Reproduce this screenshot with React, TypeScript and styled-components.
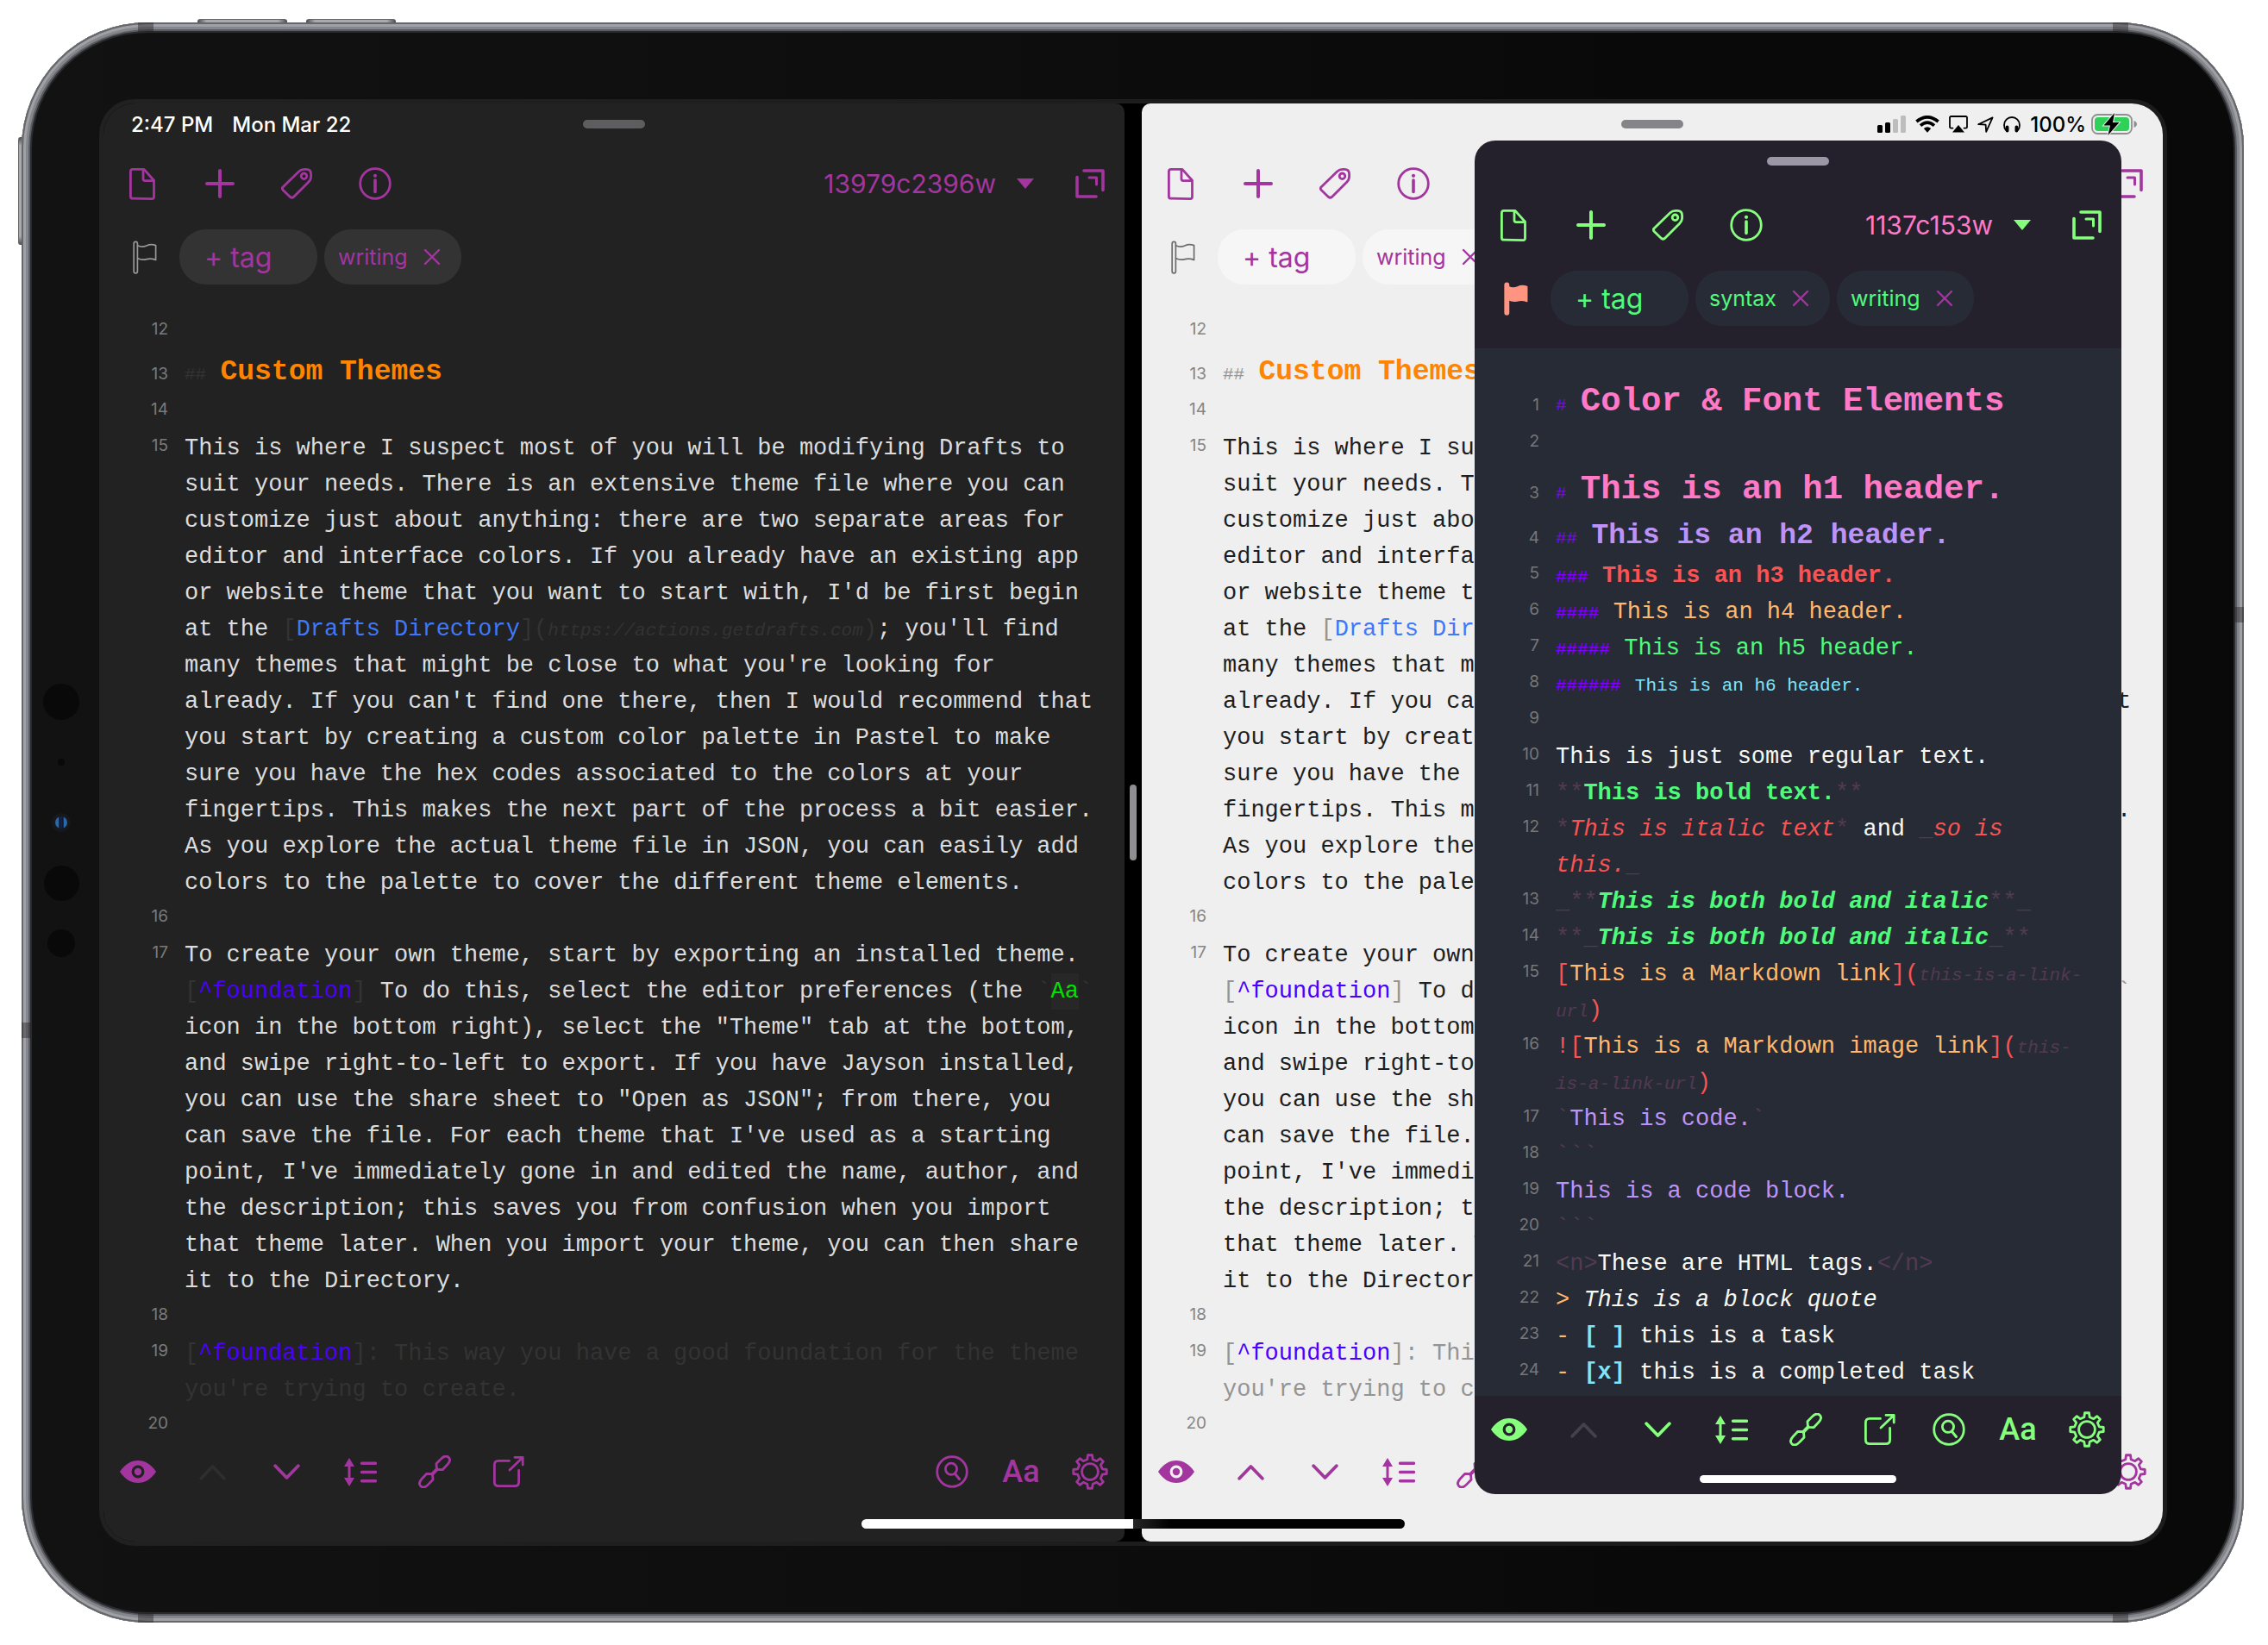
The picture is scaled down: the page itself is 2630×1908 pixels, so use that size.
import React from "react";
import styled, { createGlobalStyle, ThemeProvider } from "styled-components";

const mono = `"Liberation Mono", "DejaVu Sans Mono", monospace`;
const sans = `Inter, Roboto, "Liberation Sans", sans-serif`;

interface PaneTheme {
  chrome: string;
  editor: string;
  accent: string;
  tagText: string;
  close: string;
  count: string;
  pill: string;
  flag: string;
  flagFilled: boolean;
  handle: string;
  text: string;
  number: string;
  muted: string;
  disabled: string;
  codeBg: string;
}

const dark: PaneTheme = {
  chrome: "#222222",
  editor: "#222222",
  accent: "#a3359f",
  tagText: "#a3359f",
  close: "#a3359f",
  count: "#a3359f",
  pill: "#333333",
  flag: "#98989c",
  flagFilled: false,
  handle: "#5e5e60",
  text: "#dcdcdc",
  number: "#7a7a7a",
  muted: "#333333",
  disabled: "#2e2e2e",
  codeBg: "#272727",
};

const light: PaneTheme = {
  ...dark,
  chrome: "#efefef",
  editor: "#efefef",
  pill: "#f6f6f6",
  flag: "#6b6b6b",
  handle: "#858589",
  text: "#1e1e1e",
  number: "#858585",
  muted: "#949494",
  disabled: "#a3359f",
  codeBg: "#e8e8e8",
};

const dracula: PaneTheme = {
  chrome: "#25212c",
  editor: "#272b36",
  accent: "#86ff7d",
  tagText: "#50fa7b",
  close: "#a3359f",
  count: "#ff79c6",
  pill: "#272b36",
  flag: "#ff9580",
  flagFilled: true,
  handle: "#9b97a5",
  text: "#f8f8f2",
  number: "#767779",
  muted: "#523a52",
  disabled: "#44414d",
  codeBg: "#272b36",
};

const GlobalStyle = createGlobalStyle`
  *, *::before, *::after { box-sizing: border-box; }
  body { margin: 0; background: #ffffff; font-family: ${sans}; }
  button { margin: 0; padding: 0; border: 0; background: none; font: inherit; color: inherit; cursor: pointer; }
  svg { display: block; flex: none; }
`;

/* ---------- device ---------- */

const Page = styled.main`
  padding: 26px 28px 26px 25px;
`;

const Device = styled.div`
  position: relative;
`;

const Body = styled.div`
  position: relative;
  padding: 12px;
  border-radius: 146px;
  background: #2a2b2e;
  box-shadow:
    inset 0 0 0 2px #66676b,
    inset 0 0 0 5px #a0a1a6,
    inset 0 0 0 8px #85868b,
    inset 0 0 0 10px #5b5c61;
`;

const Glass = styled.div`
  display: flex;
  padding: 77px 77px 77px 0;
  border-radius: 134px;
  background: linear-gradient(90deg, #121212, #0e0e0e 40%, #090909 75%);
`;

const SensorStrip = styled.div`
  flex: none;
  width: 68px;
  margin-right: 10px;
  display: flex;
  flex-direction: column;
  justify-content: center;
  align-items: center;
`;

const SensorCell = styled.div`
  height: 70px;
  display: flex;
  align-items: center;
`;

const Sensor = styled.div<{ $size: number }>`
  width: ${(p) => p.$size}px;
  height: ${(p) => p.$size}px;
  border-radius: 50%;
  background: #090909;
`;

const Camera = styled.div`
  width: 22px;
  height: 22px;
  border-radius: 50%;
  background: #17181b;
  display: flex;
  align-items: center;
  justify-content: center;
`;

const Lens = styled.div`
  width: 14px;
  height: 14px;
  border-radius: 50%;
  background: linear-gradient(90deg, #2a68a8 28%, #0b1430 34%, #16264d 50%, #0b1430 66%, #2a68a8 72%);
`;

const Band = styled.div<{ $edge: "top" | "bottom" | "left" | "right"; $at: string }>`
  position: absolute;
  background: rgba(30, 30, 34, 0.42);
  ${(p) =>
    p.$edge === "top" || p.$edge === "bottom"
      ? `${p.$edge}: 0; left: ${p.$at}; width: 18px; height: 11px;`
      : `${p.$edge}: 0; top: ${p.$at}; width: 11px; height: 18px;`}
`;

const TopKey = styled.div<{ $left: number }>`
  position: absolute;
  top: -4px;
  left: ${(p) => p.$left}px;
  width: 104px;
  height: 8px;
  border-radius: 3px;
  background: linear-gradient(90deg, #4a4b4f, #a9aaae 10%, #a9aaae 90%, #4a4b4f);
  border-top: 1px solid #66676b;
`;

const SideKey = styled.div`
  position: absolute;
  left: -4px;
  top: 133px;
  width: 8px;
  height: 125px;
  border-radius: 3px;
  background: linear-gradient(#4a4b4f, #a9aaae 8%, #a9aaae 92%, #4a4b4f);
  border-left: 1px solid #66676b;
`;

const ScreenRim = styled.div`
  flex: 1;
  min-width: 0;
  padding: 5px;
  border-radius: 41px;
  background: linear-gradient(90deg, #212121, #1c1c1c 60%);
`;

const Screen = styled.div`
  position: relative;
  display: flex;
  border-radius: 36px;
  overflow: hidden;
  background: #000000;
`;

const Divider = styled.div`
  flex: none;
  width: 20px;
  display: flex;
  align-items: center;
  justify-content: center;
`;

const DividerGrip = styled.div`
  width: 8px;
  height: 88px;
  border-radius: 4px;
  background: #8e8e93;
`;

const HomeIndicator = styled.div`
  position: absolute;
  left: 0;
  right: 0;
  bottom: 15px;
  margin: 0 auto;
  width: 630px;
  height: 11px;
  border-radius: 6px;
  background: linear-gradient(90deg, #ffffff 50%, #262626 50%, #000000 57%);
`;

/* ---------- pane ---------- */

const Pane = styled.section<{ $side: "left" | "right" }>`
  flex: 1;
  min-width: 0;
  background: ${(p) => p.theme.chrome};
  border-radius: ${(p) => (p.$side === "left" ? "0 10px 10px 0" : "10px 0 0 10px")};
`;

const SlideOver = styled.section`
  position: absolute;
  top: 43px;
  right: 48px;
  width: 750px;
  border-radius: 24px;
  overflow: hidden;
  background: ${(p) => p.theme.chrome};
`;

const Header = styled.header<{ $floating?: boolean }>`
  padding-bottom: 26px;
  > :first-child {
    margin-bottom: ${(p) => (p.$floating ? 5 : 0)}px;
  }
`;

const StatusBar = styled.div`
  height: 48px;
  display: grid;
  grid-template-columns: 1fr auto 1fr;
  align-items: center;
`;

const Handle = styled.div`
  grid-column: 2;
  width: 72px;
  height: 10px;
  border-radius: 5px;
  background: ${(p) => p.theme.handle};
`;

const Clock = styled.div`
  grid-column: 1;
  grid-row: 1;
  display: flex;
  gap: 22px;
  padding-left: 32px;
  font-size: 24px;
  font-weight: 500;
  color: #ffffff;
`;

const Indicators = styled.div`
  grid-column: 3;
  grid-row: 1;
  justify-self: end;
  display: flex;
  align-items: center;
  gap: 11px;
  padding-right: 29px;
  font-size: 24px;
  font-weight: 500;
  color: #000000;
`;

const Charge = styled.span`
  display: flex;
  align-items: center;
  gap: 6px;
`;

const Toolbar = styled.div`
  height: 90px;
  display: flex;
  align-items: center;
  color: ${(p) => p.theme.accent};
`;

const ToolButton = styled.button<{ $w: number }>`
  flex: none;
  width: ${(p) => p.$w}px;
  height: 60px;
  display: flex;
  align-items: center;
  justify-content: center;
`;

const CountButton = styled.button`
  margin-left: auto;
  margin-right: 25px;
  display: flex;
  align-items: center;
  gap: 24px;
  font-size: 30px;
  line-height: 40px;
`;

const Count = styled.span`
  color: ${(p) => p.theme.count};
`;

const TagRow = styled.div`
  display: flex;
  align-items: center;
  gap: 8px;
  margin-top: 8px;
  padding-left: 15px;
`;

const FlagButton = styled.button`
  width: 65px;
  height: 64px;
  padding-left: 19px;
  color: ${(p) => p.theme.flag};
`;

const AddTag = styled.button`
  width: 160px;
  height: 64px;
  padding-left: 29px;
  border-radius: 31px;
  background: ${(p) => p.theme.pill};
  color: ${(p) => p.theme.tagText};
  font-size: 32px;
  text-align: left;
  white-space: nowrap;
`;

const Tag = styled.span`
  height: 64px;
  padding: 0 24px 0 16px;
  border-radius: 31px;
  display: flex;
  align-items: center;
  gap: 18px;
  background: ${(p) => p.theme.pill};
  color: ${(p) => p.theme.tagText};
  font-size: 25px;
`;

const RemoveTag = styled.button`
  color: ${(p) => p.theme.close};
`;

const Editor = styled.div<{ $padTop: number; $padBottom: number }>`
  padding: ${(p) => p.$padTop}px 30px ${(p) => p.$padBottom}px 0;
  background: ${(p) => p.theme.editor};
  color: ${(p) => p.theme.text};
  font-family: ${mono};
  font-size: 27px;
  line-height: 42px;
`;

const Row = styled.div<{ $level: number }>`
  display: grid;
  grid-template-columns: 75px minmax(0, 1fr);
  column-gap: 19px;
  align-items: ${(p) => (p.$level === 1 || p.$level === 2 ? "baseline" : "start")};
  min-height: 42px;
  padding-top: ${(p) => (p.$level === 1 ? 4 : 0)}px;
`;

const LineNumber = styled.span`
  font-family: ${sans};
  font-size: 19px;
  line-height: 36px;
  text-align: right;
  color: ${(p) => p.theme.number};
`;

const Heading = styled.span<{ $level: number; $color: string }>`
  font-size: ${(p) => [39, 33, 27, 27, 27, 21][p.$level - 1]}px;
  line-height: ${(p) => [56, 51, 42, 42, 42, 24][p.$level - 1]}px;
  font-weight: ${(p) => (p.$level <= 3 ? 700 : 400)};
  color: ${(p) => p.$color};
`;

const Hashes = styled.span<{ $color?: string }>`
  font-size: 21px;
  line-height: 24px;
  color: ${(p) => p.$color || p.theme.muted};
`;

const Ink = styled.span<{ $color?: string; $bold?: boolean; $italic?: boolean }>`
  color: ${(p) => p.$color || p.theme.muted};
  font-weight: ${(p) => (p.$bold ? 700 : 400)};
  font-style: ${(p) => (p.$italic ? "italic" : "normal")};
`;

const Url = styled(Ink)`
  font-size: 21px;
  line-height: 24px;
  font-style: italic;
`;

const LinkText = styled.a`
  color: #3f78f8;
  text-decoration: none;
`;

const Footnote = styled.span`
  color: #4a00ff;
`;

const NoWrap = styled.span`
  white-space: nowrap;
`;

const CodeMark = styled.code`
  font-family: inherit;
  padding: 6px 0;
  background: ${(p) => p.theme.codeBg};
  color: #00e100;
`;

const BottomBar = styled.footer<{ $floating?: boolean }>`
  display: flex;
  justify-content: space-between;
  align-items: center;
  height: ${(p) => (p.$floating ? 78 : 64)}px;
  margin-bottom: ${(p) => (p.$floating ? 36 : 49)}px;
  color: ${(p) => p.theme.accent};
`;

const Tools = styled.div<{ $gap: number }>`
  display: flex;
  gap: ${(p) => p.$gap}px;
`;

const StepButton = styled(ToolButton)`
  &:disabled {
    color: ${(p) => p.theme.disabled};
  }
`;

const FontButton = styled(ToolButton)`
  font-family: Roboto, sans-serif;
  font-size: 36px;
  font-weight: 500;
`;

const PanelIndicator = styled.div`
  position: absolute;
  left: 0;
  right: 0;
  bottom: 13px;
  margin: 0 auto;
  width: 228px;
  height: 9px;
  border-radius: 5px;
  background: #ffffff;
`;

/* ---------- icons ---------- */

interface IconProps {
  w: number;
  h: number;
  sw?: number;
  children: React.ReactNode;
}

const Icon = ({ w, h, sw = 2.6, children }: IconProps) => (
  <svg
    width={w}
    height={h}
    viewBox={`0 0 ${w} ${h}`}
    fill="none"
    stroke="currentColor"
    strokeWidth={sw}
    strokeLinecap="round"
    strokeLinejoin="round"
    aria-hidden="true"
  >
    {children}
  </svg>
);

const DocIcon = () => (
  <Icon w={30} h={37} sw={2.8}>
    <path d="M3.8 1.4H17L28.5 14.2V33.3Q28.5 35.6 26.2 35.6L3.6 35.2Q1.4 35.2 1.4 33V3.8Q1.4 1.4 3.8 1.4Z" />
    <path d="M16 2V12.6Q16 14.6 18 14.6H28" />
  </Icon>
);

const PlusIcon = () => (
  <Icon w={34} h={34} sw={4}>
    <path d="M17 2V32M2 17H32" />
  </Icon>
);

const TagIcon = () => (
  <Icon w={38} h={36} sw={2.8}>
    <path d="M20.5 4Q23.2 1.4 27 1.4H29Q34.6 1.4 34.6 7V9.5Q34.6 13.3 31.7 16.3L14.5 33.4Q12.5 35.2 10.5 33.4L2 25.3Q.7 23.5 2 22Z" />
    <circle cx="26.5" cy="9.3" r="3.3" />
  </Icon>
);

const InfoIcon = () => (
  <Icon w={38} h={38} sw={2.8}>
    <circle cx="19" cy="19" r="17.3" />
    <path d="M19 15V28.5" strokeWidth={3.6} />
    <circle cx="19" cy="9.8" r="2.1" fill="currentColor" stroke="none" />
  </Icon>
);

const ExpandIcon = () => (
  <Icon w={34} h={34} sw={3.6}>
    <path d="M2 9.5V32H24" />
    <path d="M10 2H32V24.5" />
    <path d="M16 10H24.5V18" strokeWidth={3} />
  </Icon>
);

const TriangleIcon = () => (
  <svg width={20} height={12} viewBox="0 0 20 12" aria-hidden="true">
    <path d="M0 0H20L10 12Z" fill="currentColor" />
  </svg>
);

const FlagIcon = ({ filled }: { filled: boolean }) => (
  <svg width={28} height={39} viewBox="0 0 28 39" aria-hidden="true">
    <path
      d="M1.2 3.4a2.1 2.1 0 0 1 4.2 0V5.8Q10.5 8.4 16 5.9Q21 3.6 26.6 5.6V22.4Q21 20.2 16 21.6Q10.5 23.2 5.4 20.6V35.7a2.1 2.1 0 0 1-4.2 0Z"
      fill={filled ? "currentColor" : "none"}
      stroke="currentColor"
      strokeWidth={1.7}
      strokeLinejoin="round"
    />
    {!filled && <path d="M5.4 5.8V20.6" stroke="currentColor" strokeWidth={1.7} />}
  </svg>
);

const CrossIcon = () => (
  <Icon w={20} h={20} sw={2.4}>
    <path d="M2 2L18 18M18 2L2 18" />
  </Icon>
);

const EyeIcon = () => (
  <svg width={42} height={26} viewBox="0 0 42 26" fill="currentColor" aria-hidden="true">
    <path
      fillRule="evenodd"
      d="M0 13C6 4 13 0 21 0S36 4 42 13C36 22 29 26 21 26S6 22 0 13ZM21 5.6A7.4 7.4 0 1 0 21 20.4A7.4 7.4 0 1 0 21 5.6Z"
    />
    <circle cx="21" cy="13" r="4.2" />
  </svg>
);

const UpIcon = () => (
  <Icon w={31} h={19} sw={3.8}>
    <path d="M2.2 16.8L15.5 3L28.8 16.8" />
  </Icon>
);

const DownIcon = () => (
  <Icon w={31} h={19} sw={3.8}>
    <path d="M2.2 2.2L15.5 16L28.8 2.2" />
  </Icon>
);

const SpacingIcon = () => (
  <Icon w={38} h={33} sw={3.4}>
    <path d="M6 6V27" strokeWidth={3} />
    <path d="M6 0L12 10H0ZM6 33L12 23H0Z" fill="currentColor" stroke="none" />
    <path d="M20.5 6.2H36.5M20.5 16.5H36.5M20.5 26.8H36.5" />
  </Icon>
);

const LinkIcon = () => (
  <Icon w={38} h={38} sw={2.8}>
    <g transform="translate(19 19) rotate(-46)">
      <path d="M3.6 0L8 -5H15.5Q23.2 -5 23.2 0Q23.2 5 15.5 5H8Z" />
      <path d="M-3.6 0L-8 -5H-15.5Q-23.2 -5 -23.2 0Q-23.2 5 -15.5 5H-8Z" />
      <path d="M-4 0H4" strokeWidth={4} />
    </g>
  </Icon>
);

const ShareIcon = () => (
  <Icon w={36} h={36} sw={2.8}>
    <path d="M18.5 5.4H6Q1.4 5.4 1.4 10V30Q1.4 34.6 6 34.6H25Q29.6 34.6 29.6 30V16.5" />
    <path d="M19 16L33.6 2M25 1.4H34.2V10" />
  </Icon>
);

const SearchIcon = () => (
  <Icon w={38} h={38} sw={2.8}>
    <circle cx="19" cy="19" r="17.3" />
    <circle cx="18" cy="15.8" r="6.6" />
    <path d="M22.4 21.2L27.5 27.5" strokeWidth={3} />
  </Icon>
);

const gearOutline = (() => {
  const pts: string[] = [];
  const teeth = 8;
  for (let i = 0; i < teeth; i++) {
    const mid = (i * 2 * Math.PI) / teeth - Math.PI / 2;
    const at = (r: number, a: number) =>
      `${(21 + r * Math.cos(mid + a)).toFixed(2)} ${(21 + r * Math.sin(mid + a)).toFixed(2)}`;
    pts.push(at(14.6, -0.22), at(19.4, -0.13), at(19.4, 0.13), at(14.6, 0.22));
  }
  return `M${pts.join("L")}Z`;
})();

const GearIcon = () => (
  <Icon w={42} h={42} sw={2.8}>
    <path d={gearOutline} />
    <circle cx="21" cy="21" r="9.4" />
  </Icon>
);

const SignalIcon = () => (
  <svg width={33} height={20} viewBox="0 0 33 20" fill="currentColor" aria-hidden="true">
    <rect x="0" y="11" width="6" height="9" rx="1.5" />
    <rect x="9" y="8" width="6" height="12" rx="1.5" />
    <rect x="18" y="4" width="6" height="16" rx="1.5" fill="#bdbdbd" />
    <rect x="27" y="0" width="6" height="20" rx="1.5" fill="#bdbdbd" />
  </svg>
);

const WifiIcon = () => (
  <svg width={28} height={20} viewBox="0 0 28 20" fill="none" stroke="currentColor" strokeWidth={3.6} aria-hidden="true">
    <path d="M1.4 7Q14 -3.4 26.6 7" />
    <path d="M6 11.6Q14 4.6 22 11.6" />
    <path d="M9.8 15Q14 11.4 18.2 15L14 19.8Z" fill="currentColor" stroke="none" />
  </svg>
);

const AirplayIcon = () => (
  <Icon w={22} h={20} sw={1.8}>
    <path d="M4.5 14.6H2.6Q1 14.6 1 13V2.6Q1 1 2.6 1H19.4Q21 1 21 2.6V13Q21 14.6 19.4 14.6H17.5" />
    <path d="M11 11L18 19.4H4Z" fill="currentColor" stroke="none" />
  </Icon>
);

const LocationIcon = () => (
  <Icon w={19} h={19} sw={1.8}>
    <path d="M1.2 9.2L17.6 1.4L10.2 17.8L9.6 9.6Z" />
  </Icon>
);

const HeadphonesIcon = () => (
  <Icon w={20} h={19} sw={1.8}>
    <path d="M3 16Q1 13.5 1 10A9 9 0 0 1 19 10Q19 13.5 17 16" />
    <path d="M4.6 12.5V16.5M15.4 12.5V16.5" strokeWidth={3.8} />
  </Icon>
);

const BatteryIcon = () => (
  <svg width={54} height={26} viewBox="0 0 54 26" aria-hidden="true">
    <rect x="1" y="2" width="46" height="22" rx="6.5" fill="none" stroke="#8f8f8f" strokeWidth="1.8" />
    <rect x="4" y="5" width="40" height="16" rx="4" fill="#30d158" />
    <path d="M49.5 9Q53 10.5 53 13Q53 15.5 49.5 17Z" fill="#8f8f8f" />
    <path
      d="M27 0L14.5 14.6H22L19.4 26L32.5 11H25Z"
      fill="#000000"
      stroke="#efefef"
      strokeWidth="2"
      paintOrder="stroke"
    />
  </svg>
);

/* ---------- shared parts ---------- */

interface PaneHeaderProps {
  count: string;
  tags: string[];
  theme: PaneTheme;
  floating?: boolean;
  before?: React.ReactNode;
  after?: React.ReactNode;
}

const PaneHeader = ({ count, tags, theme, floating, before, after }: PaneHeaderProps) => (
  <Header $floating={floating}>
    <StatusBar>
      {before}
      <Handle />
      {after}
    </StatusBar>
    <Toolbar>
      <ToolButton $w={90} aria-label="Drafts"><DocIcon /></ToolButton>
      <ToolButton $w={90} aria-label="New draft"><PlusIcon /></ToolButton>
      <ToolButton $w={90} aria-label="Tags"><TagIcon /></ToolButton>
      <ToolButton $w={90} aria-label="Info"><InfoIcon /></ToolButton>
      <CountButton>
        <Count>{count}</Count>
        <TriangleIcon />
      </CountButton>
      <ToolButton $w={80} aria-label="Actions"><ExpandIcon /></ToolButton>
    </Toolbar>
    <TagRow>
      <FlagButton aria-label="Flag"><FlagIcon filled={theme.flagFilled} /></FlagButton>
      <AddTag>+ tag</AddTag>
      {tags.map((tag) => (
        <Tag key={tag}>
          {tag}
          <RemoveTag aria-label={`Remove ${tag}`}><CrossIcon /></RemoveTag>
        </Tag>
      ))}
    </TagRow>
  </Header>
);

const PaneFooter = ({ atTop, floating }: { atTop: boolean; floating?: boolean }) => (
  <BottomBar $floating={floating}>
    <Tools $gap={6}>
      <ToolButton $w={80} aria-label="Preview"><EyeIcon /></ToolButton>
      <StepButton $w={80} aria-label="Previous" disabled={atTop}><UpIcon /></StepButton>
      <StepButton $w={80} aria-label="Next"><DownIcon /></StepButton>
      <ToolButton $w={80} aria-label="Arrange lines"><SpacingIcon /></ToolButton>
      <ToolButton $w={80} aria-label="Link mode"><LinkIcon /></ToolButton>
      <ToolButton $w={80} aria-label="Share"><ShareIcon /></ToolButton>
    </Tools>
    <Tools $gap={0}>
      <ToolButton $w={80} aria-label="Find"><SearchIcon /></ToolButton>
      <FontButton $w={80} aria-label="Typography">Aa</FontButton>
      <ToolButton $w={80} aria-label="Settings"><GearIcon /></ToolButton>
    </Tools>
  </BottomBar>
);

interface LineProps {
  n: number;
  level?: number;
  children?: React.ReactNode;
}

const Line = ({ n, level = 0, children }: LineProps) => (
  <Row $level={level}>
    <LineNumber>{n}</LineNumber>
    <div>{children}</div>
  </Row>
);

/* ---------- documents ---------- */

const ThemesArticle = () => (
  <Editor $padTop={8} $padBottom={0}>
    <Line n={12} />
    <Line n={13} level={2}>
      <Hashes>##</Hashes> <Heading $level={2} $color="#ff8400">Custom Themes</Heading>
    </Line>
    <Line n={14} />
    <Line n={15}>
      This is where I suspect most of you will be modifying Drafts to suit your needs. There is an
      extensive theme file where you can customize just about anything: there are two separate areas
      for editor and interface colors. If you already have an existing app or website theme that you
      want to start with, I'd be first begin at the <Ink>[</Ink>
      <LinkText href="https://actions.getdrafts.com">Drafts Directory</LinkText>
      <Ink>](</Ink>
      <Url>https://actions.getdrafts.com</Url>
      <Ink>)</Ink>; you'll find many themes that might be close to what you're looking for already. If
      you can't find one there, then I would recommend that you start by creating a custom color
      palette in Pastel to make sure you have the hex codes associated to the colors at your
      fingertips. This makes the next part of the process a bit easier. As you explore the actual
      theme file in JSON, you can easily add colors to the palette to cover the different theme
      elements.
    </Line>
    <Line n={16} />
    <Line n={17}>
      To create your own theme, start by exporting an installed theme. <Ink>[</Ink>
      <Footnote>^foundation</Footnote>
      <Ink>]</Ink> To do this, select the editor preferences (the{" "}
      <NoWrap>
        <Ink>`</Ink>
        <CodeMark>Aa</CodeMark>
        <Ink>`</Ink>
      </NoWrap>{" "}
      icon in the bottom right), select the "Theme" tab at the bottom, and swipe right-to-left to
      export. If you have Jayson installed, you can use the share sheet to "Open as JSON"; from
      there, you can save the file. For each theme that I've used as a starting point, I've
      immediately gone in and edited the name, author, and the description; this saves you from
      confusion when you import that theme later. When you import your theme, you can then share it
      to the Directory.
    </Line>
    <Line n={18} />
    <Line n={19}>
      <Ink>[</Ink>
      <Footnote>^foundation</Footnote>
      <Ink>]: This way you have a good foundation for the theme you're trying to create.</Ink>
    </Line>
    <Line n={20} />
  </Editor>
);

const c = {
  hash: "#8000ff",
  pink: "#ff79c6",
  violet: "#bd93f9",
  red: "#f95353",
  orange: "#ffb86c",
  green: "#50fa7b",
  cyan: "#80e4fa",
};

const SyntaxSample = () => (
  <Editor $padTop={30} $padBottom={6}>
    <Line n={1} level={1}>
      <Hashes $color={c.hash}>#</Hashes> <Heading $level={1} $color={c.pink}>Color &amp; Font Elements</Heading>
    </Line>
    <Line n={2} />
    <Line n={3} level={1}>
      <Hashes $color={c.hash}>#</Hashes> <Heading $level={1} $color={c.pink}>This is an h1 header.</Heading>
    </Line>
    <Line n={4} level={2}>
      <Hashes $color={c.hash}>##</Hashes> <Heading $level={2} $color={c.violet}>This is an h2 header.</Heading>
    </Line>
    <Line n={5} level={3}>
      <Hashes $color={c.hash}>###</Hashes> <Heading $level={3} $color={c.red}>This is an h3 header.</Heading>
    </Line>
    <Line n={6} level={4}>
      <Hashes $color={c.hash}>####</Hashes> <Heading $level={4} $color={c.orange}>This is an h4 header.</Heading>
    </Line>
    <Line n={7} level={5}>
      <Hashes $color={c.hash}>#####</Hashes> <Heading $level={5} $color={c.green}>This is an h5 header.</Heading>
    </Line>
    <Line n={8} level={6}>
      <Hashes $color={c.hash}>######</Hashes> <Heading $level={6} $color={c.cyan}>This is an h6 header.</Heading>
    </Line>
    <Line n={9} />
    <Line n={10}>This is just some regular text.</Line>
    <Line n={11}>
      <Ink>**</Ink>
      <Ink $bold $color={c.green}>This is bold text.</Ink>
      <Ink>**</Ink>
    </Line>
    <Line n={12}>
      <Ink>*</Ink>
      <Ink $italic $color={c.red}>This is italic text</Ink>
      <Ink>*</Ink> and <Ink>_</Ink>
      <Ink $italic $color={c.red}>so is this.</Ink>
      <Ink>_</Ink>
    </Line>
    <Line n={13}>
      <Ink>_**</Ink>
      <Ink $bold $italic $color={c.green}>This is both bold and italic</Ink>
      <Ink>**_</Ink>
    </Line>
    <Line n={14}>
      <Ink>**_</Ink>
      <Ink $bold $italic $color={c.green}>This is both bold and italic</Ink>
      <Ink>_**</Ink>
    </Line>
    <Line n={15}>
      <Ink $color={c.red}>[</Ink>
      <Ink $color={c.orange}>This is a Markdown link</Ink>
      <Ink $color={c.red}>](</Ink>
      <Url>this-is-a-link-url</Url>
      <Ink $color={c.red}>)</Ink>
    </Line>
    <Line n={16}>
      <Ink $color={c.red}>![</Ink>
      <Ink $color={c.orange}>This is a Markdown image link</Ink>
      <Ink $color={c.red}>](</Ink>
      <Url>this-is-a-link-url</Url>
      <Ink $color={c.red}>)</Ink>
    </Line>
    <Line n={17}>
      <Ink>`</Ink>
      <Ink $color={c.violet}>This is code.</Ink>
      <Ink>`</Ink>
    </Line>
    <Line n={18}><Ink>```</Ink></Line>
    <Line n={19}><Ink $color={c.violet}>This is a code block.</Ink></Line>
    <Line n={20}><Ink>```</Ink></Line>
    <Line n={21}>
      <Ink>&lt;n&gt;</Ink>These are HTML tags.<Ink>&lt;/n&gt;</Ink>
    </Line>
    <Line n={22}>
      <Ink $color={c.orange}>&gt;</Ink> <Ink $italic $color="#f8f8f2">This is a block quote</Ink>
    </Line>
    <Line n={23}>
      <Ink $color={c.orange}>-</Ink> <Ink $bold $color={c.cyan}>[ ]</Ink> this is a task
    </Line>
    <Line n={24}>
      <Ink $color={c.orange}>-</Ink> <Ink $bold $color={c.cyan}>[x]</Ink> this is a completed task
    </Line>
  </Editor>
);

export default function App() {
  return (
    <Page>
      <GlobalStyle />
      <Device>
        <TopKey $left={204} />
        <TopKey $left={330} />
        <SideKey />
        <Body>
          <Glass>
            <SensorStrip>
              <SensorCell><Sensor $size={42} /></SensorCell>
              <SensorCell><Sensor $size={8} /></SensorCell>
              <SensorCell><Camera><Lens /></Camera></SensorCell>
              <SensorCell><Sensor $size={41} /></SensorCell>
              <SensorCell><Sensor $size={32} /></SensorCell>
            </SensorStrip>
            <ScreenRim>
              <Screen>
                <ThemeProvider theme={dark}>
                  <Pane $side="left">
                    <PaneHeader
                      theme={dark}
                      count="13979c2396w"
                      tags={["writing"]}
                      before={
                        <Clock>
                          <span>2:47 PM</span>
                          <span>Mon Mar 22</span>
                        </Clock>
                      }
                    />
                    <ThemesArticle />
                    <PaneFooter atTop />
                  </Pane>
                </ThemeProvider>
                <Divider><DividerGrip /></Divider>
                <ThemeProvider theme={light}>
                  <Pane $side="right">
                    <PaneHeader
                      theme={light}
                      count="13979c2396w"
                      tags={["writing"]}
                      after={
                        <Indicators>
                          <SignalIcon />
                          <WifiIcon />
                          <AirplayIcon />
                          <LocationIcon />
                          <HeadphonesIcon />
                          <Charge>
                            100%
                            <BatteryIcon />
                          </Charge>
                        </Indicators>
                      }
                    />
                    <ThemesArticle />
                    <PaneFooter atTop={false} />
                  </Pane>
                </ThemeProvider>
                <HomeIndicator />
                <ThemeProvider theme={dracula}>
                  <SlideOver>
                    <PaneHeader
                      theme={dracula}
                      floating
                      count="1137c153w"
                      tags={["syntax", "writing"]}
                    />
                    <SyntaxSample />
                    <PaneFooter atTop floating />
                    <PanelIndicator />
                  </SlideOver>
                </ThemeProvider>
              </Screen>
            </ScreenRim>
          </Glass>
          <Band $edge="top" $at="135px" />
          <Band $edge="top" $at="calc(100% - 152px)" />
          <Band $edge="bottom" $at="135px" />
          <Band $edge="bottom" $at="calc(100% - 152px)" />
          <Band $edge="left" $at="1160px" />
          <Band $edge="right" $at="678px" />
        </Body>
      </Device>
    </Page>
  );
}
